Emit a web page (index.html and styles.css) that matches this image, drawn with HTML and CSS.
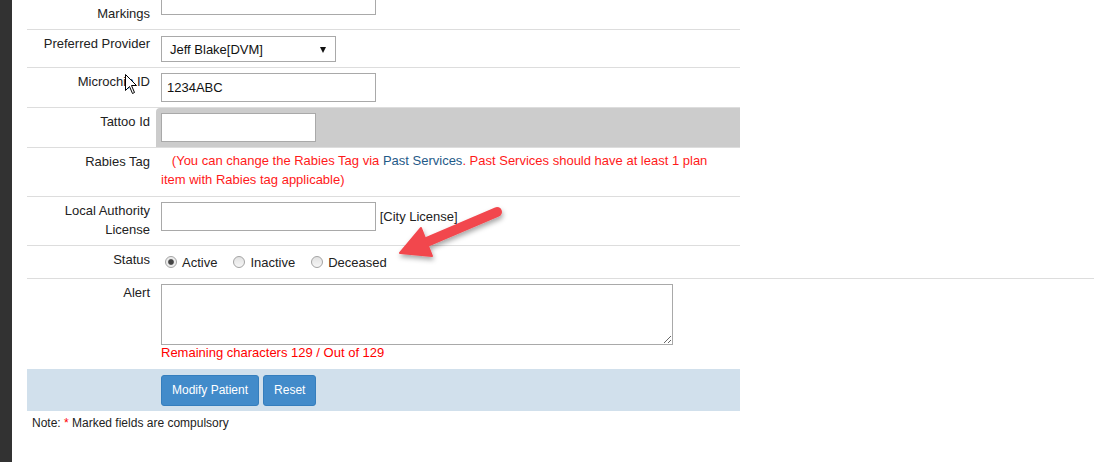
FILE: index.html
```html
<!DOCTYPE html>
<html>
<head>
<meta charset="utf-8">
<link rel="stylesheet" href="styles.css">
</head>
<body>
<div class="page">
  <div class="sidebar"></div>
  <main class="main">
    <div class="form">
      <div class="row">
        <div class="label">Markings</div>
        <div class="value"><input class="field field-wide field-cut" type="text"></div>
      </div>
      <div class="row">
        <div class="label">Preferred Provider</div>
        <div class="value">
          <div class="select"><span>Jeff Blake[DVM]</span><span class="caret"></span></div>
        </div>
      </div>
      <div class="row">
        <div class="label">Microchip ID</div>
        <div class="value"><input class="field field-wide" type="text" value="1234ABC"></div>
      </div>
      <div class="row">
        <div class="label">Tattoo Id</div>
        <div class="value value-gray"><input class="field field-short" type="text"></div>
      </div>
      <div class="row">
        <div class="label">Rabies Tag</div>
        <div class="value value-text"><span class="warn">&nbsp;&nbsp;&nbsp;(You can change the Rabies Tag via <a class="link" href="#">Past Services</a>. Past Services should have at least 1 plan<br>item with Rabies tag applicable)</span></div>
      </div>
      <div class="row">
        <div class="label">Local Authority<br>License</div>
        <div class="value"><input class="field field-wide" type="text"> <span class="hint">[City License]</span></div>
      </div>
      <div class="row row-last">
        <div class="label">Status</div>
        <div class="value value-radios">
          <label class="radio"><input type="radio" name="status" checked><span>Active</span></label>
          <label class="radio"><input type="radio" name="status"><span>Inactive</span></label>
          <label class="radio"><input type="radio" name="status"><span>Deceased</span></label>
        </div>
      </div>
    </div>
    <div class="divider"></div>
    <div class="form">
      <div class="row row-last">
        <div class="label">Alert</div>
        <div class="value value-alert">
          <textarea class="area"></textarea>
          <div class="remaining">Remaining characters 129 / Out of 129</div>
        </div>
      </div>
      <div class="row row-actions">
        <div class="label"></div>
        <div class="value value-actions">
          <button class="btn" type="button">Modify Patient</button>
          <button class="btn" type="button">Reset</button>
        </div>
      </div>
    </div>
    <p class="note">Note: <span class="star">*</span> Marked fields are compulsory</p>
  </main>
  <svg class="overlay" width="1094" height="462" viewBox="0 0 1094 462">
    <defs>
      <filter id="shadow" x="-20%" y="-20%" width="140%" height="160%">
        <feDropShadow dx="1" dy="3" stdDeviation="2.5" flood-color="#000" flood-opacity="0.35"/>
      </filter>
    </defs>
    <g filter="url(#shadow)" fill="#f2474d" stroke="#f2474d">
      <line x1="497" y1="212" x2="422" y2="244" stroke-width="10" stroke-linecap="round"/>
      <polygon points="400,253 421,228 432,256" stroke-width="2" stroke-linejoin="round"/>
    </g>
    <path d="M125.5 74.5 L125.5 90.5 L129.5 86.5 L132.5 93.5 L134.5 92.5 L131.5 85.5 L136.5 85.5 Z" fill="#fff" stroke="#000" stroke-width="1" stroke-linejoin="miter"/>
  </svg>
</div>
</body>
</html>
```
FILE: styles.css
```css
* { box-sizing: border-box; }
html, body { margin: 0; padding: 0; background: #fff; }
body {
  font-family: "Liberation Sans", Arial, sans-serif;
  font-size: 13px;
  line-height: 19px;
  color: #222;
  overflow: hidden;
}
.page {
  position: relative;
  display: flex;
  width: 1094px;
  height: 462px;
}
.sidebar {
  width: 12px;
  flex: none;
  background: #323232;
}
.main {
  flex: 1;
  padding-left: 15px;
}
.form { width: 713px; }
.row {
  display: grid;
  grid-template-columns: 129px 1fr;
  border-bottom: 1px solid #dddddd;
}
.row-last { border-bottom: none; }
.label {
  text-align: right;
  padding: 4px 6px 6px 0;
}
.value { padding: 5px; }
.value-gray {
  background: #cccccc;
  border-top-left-radius: 4px;
}
.value-text { padding: 3px 5px 7px; }
.value-radios {
  padding: 6px 5px 7px 9px;
  display: flex;
  align-items: center;
  gap: 16px;
}
.value-alert { padding: 5px 5px 8px; }
.value-actions {
  padding: 6px 5px 5px;
  display: flex;
  gap: 4px;
}
.row-actions {
  background: #d1e0ec;
  border-bottom: none;
}
.field {
  display: inline-block;
  height: 29px;
  border: 1px solid #a9a9a9;
  background: #fff;
  font: 13px "Liberation Sans", Arial, sans-serif;
  color: #111;
  padding: 0 5px;
  margin: 0;
  vertical-align: middle;
  outline: none;
}
.field-wide { width: 215px; }
.field-short { width: 155px; }
.field-cut { margin-top: -19px; vertical-align: top; }
.select {
  width: 175px;
  height: 26px;
  margin-top: 1px;
  border: 1px solid #a9a9a9;
  background: #fff;
  display: flex;
  align-items: center;
  justify-content: space-between;
  padding: 1px 8px 0 8px;
  color: #111;
}
.caret {
  width: 0;
  height: 0;
  border-left: 3.5px solid transparent;
  border-right: 3.5px solid transparent;
  border-top: 6px solid #111;
  margin-right: 1px;
}
.hint { color: #222; vertical-align: middle; }
.warn { color: #ff1a1a; }
.link { color: #1f5a88; text-decoration: none; }
.radio {
  display: flex;
  align-items: center;
  gap: 5px;
}
.radio span { position: relative; top: 1px; }
.radio input {
  appearance: none;
  -webkit-appearance: none;
  width: 12px;
  height: 12px;
  margin: 0;
  border-radius: 50%;
  border: 1px solid #a3a3a3;
  background: linear-gradient(#e2e2e2, #f6f6f6);
}
.radio input:checked {
  background: radial-gradient(circle, #444 0 2.3px, #8a8a8a 2.8px, #e8e8e8 3.3px, #f6f6f6 100%);
}
.area {
  display: block;
  width: 512px;
  height: 61px;
  border: 1px solid #a9a9a9;
  margin: 0;
  font: 13px "Liberation Sans", Arial, sans-serif;
  outline: none;
}
.remaining {
  color: #ff0000;
  line-height: 16px;
}
.divider {
  height: 1px;
  background: #dddddd;
}
.btn {
  font: 12px "Liberation Sans", Arial, sans-serif;
  line-height: 17px;
  color: #fff;
  background: #428bca;
  border: 1px solid #357ebd;
  border-radius: 3px;
  padding: 6px 10px;
  margin: 0;
}
.note {
  margin: 4px 0 0;
  padding-left: 5px;
  font-size: 12px;
  line-height: 17px;
}
.star { color: #ff0000; }
.overlay {
  position: absolute;
  left: 0;
  top: 0;
  pointer-events: none;
}
```
